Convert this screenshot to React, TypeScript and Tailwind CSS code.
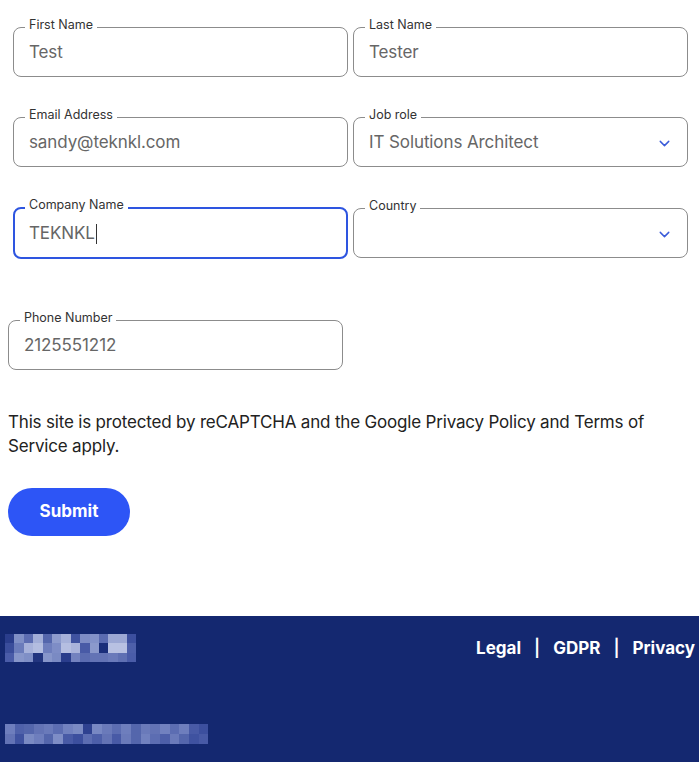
import { ChevronDown } from "lucide-react";

const mosaicTop = [
  ["bg-[#2a3d8c]", "bg-[#7f8fc6]", "bg-[#5c6db2]", "bg-[#a2aed8]", "bg-[#5466ac]", "bg-[#8d9bcd]", "bg-[#a6b1da]", "bg-[#3f52a0]", "bg-[#7d8cc5]", "bg-[#8392c9]", "bg-[#5a6bb1]", "bg-[#9ca8d4]", "bg-[#9ca8d4]", "bg-[#3c4f9e]"],
  ["bg-[#3a4d9b]", "bg-[#6b7cbb]", "bg-[#a6b1da]", "bg-[#b3bde0]", "bg-[#6e7ebd]", "bg-[#7e8dc6]", "bg-[#b5bee1]", "bg-[#a9b3db]", "bg-[#485aa6]", "bg-[#8b99cc]", "bg-[#1a2e7a]", "bg-[#b8c1e2]", "bg-[#b8c1e2]", "bg-[#4d5fa9]"],
  ["bg-[#4a5ca8]", "bg-[#8796ca]", "bg-[#7f8fc6]", "bg-[#22357f]", "bg-[#8796ca]", "bg-[#7a8ac3]", "bg-[#2a3d8c]", "bg-[#7382bf]", "bg-[#5b6cb1]", "bg-[#6373b5]", "bg-[#6373b5]", "bg-[#6a7aba]", "bg-[#5f70b3]", "bg-[#4a5ca8]"],
];

const mosaicBottom = [
  ["bg-[#6e7ebd]", "bg-[#4f61aa]", "bg-[#5466ac]", "bg-[#6373b5]", "bg-[#6a7aba]", "bg-[#5c6db2]", "bg-[#7181bf]", "bg-[#7a8ac3]", "bg-[#2e4190]", "bg-[#7888c3]", "bg-[#6a7aba]", "bg-[#5c6db2]", "bg-[#6e7ebd]", "bg-[#5466ac]", "bg-[#6a7aba]", "bg-[#6373b5]", "bg-[#7181bf]", "bg-[#5c6db2]", "bg-[#6e7ebd]", "bg-[#485aa6]", "bg-[#3c4f9e]"],
  ["bg-[#6373b5]", "bg-[#3f52a0]", "bg-[#7a8ac3]", "bg-[#6e7ebd]", "bg-[#5466ac]", "bg-[#7e8dc6]", "bg-[#485aa6]", "bg-[#3c4f9e]", "bg-[#5c6db2]", "bg-[#4d5fa9]", "bg-[#6373b5]", "bg-[#485aa6]", "bg-[#6a7aba]", "bg-[#5466ac]", "bg-[#7181bf]", "bg-[#5c6db2]", "bg-[#4d5fa9]", "bg-[#6a7aba]", "bg-[#5466ac]", "bg-[#3f52a0]", "bg-[#485aa6]"],
];

function Field({
  label,
  value,
  select,
  focused,
  className = "",
}: {
  label: string;
  value: string;
  select?: boolean;
  focused?: boolean;
  className?: string;
}) {
  return (
    <div
      className={`relative h-[50px] w-[335px] rounded-[8px] ${
        focused ? "border-2 border-[#2e55e0]" : "border border-[#8c8c8c]"
      } ${className}`}
    >
      <span
        className={`absolute ${focused ? "-top-[12px] left-[10px]" : "-top-[11px] left-[11px]"} bg-white px-[4px] text-[12.5px] leading-[16px] text-[#333]`}
      >
        {label}
      </span>
      <div className={`flex h-full items-center pt-[2px] ${focused ? "pl-[14px]" : "pl-[15px]"} pr-[14px]`}>
        <span className="text-[17px] tracking-[-0.1px] text-[#666]">{value}</span>
        {focused && <span className="ml-[1px] h-[20px] w-px bg-[#333]" />}
        {select && <ChevronDown className="ml-auto h-[17px] w-[17px] text-[#3a5bd9]" strokeWidth={2} />}
      </div>
    </div>
  );
}

export default function App() {
  return (
    <div className="min-h-[762px] w-[699px] bg-white font-['Inter',sans-serif]">
      {/* Form */}
      <div className="h-[616px] pt-[27px]">
        <div className="flex flex-col gap-[40px] pl-[13px]">
          <div className="flex gap-[5px]">
            <Field label="First Name" value="Test" />
            <Field label="Last Name" value="Tester" />
          </div>
          <div className="flex gap-[5px]">
            <Field label="Email Address" value="sandy@teknkl.com" />
            <Field label="Job role" value="IT Solutions Architect" select />
          </div>
          <div className="flex items-center gap-[5px]">
            <Field label="Company Name" value="TEKNKL" focused className="h-[52px]" />
            <Field label="Country" value="" select />
          </div>
        </div>

        <div className="mt-[61px] pl-[8px]">
          <Field label="Phone Number" value="2125551212" />
        </div>

        <p className="mt-[40px] px-[8px] text-[17px] leading-[24px] tracking-[-0.18px] text-[#222]">
          This site is protected by reCAPTCHA and the Google Privacy Policy and Terms of Service apply.
        </p>

        <button className="ml-[8px] mt-[30px] h-[48px] w-[122px] rounded-full bg-[#2d55f6] text-[17px] font-bold text-white">
          Submit
        </button>
      </div>

      {/* Footer */}
      <div className="h-[146px] bg-[#142870] pt-[18px]">
        <div className="flex items-start justify-between pl-[5px] pr-[4px]">
          <div className="flex flex-col">
            {mosaicTop.map((row, i) => (
              <div key={i} className="flex">
                {row.map((c, j) => (
                  <div key={j} className={`h-[9.4px] w-[9.4px] ${c}`} />
                ))}
              </div>
            ))}
          </div>
          <div className="mt-[2px] flex items-center gap-[13px] text-[17px] font-bold text-white">
            <span>Legal</span>
            <span className="font-semibold">|</span>
            <span>GDPR</span>
            <span className="font-semibold">|</span>
            <span>Privacy</span>
          </div>
        </div>
        <div className="mt-[62px] flex flex-col pl-[5px]">
          {mosaicBottom.map((row, i) => (
            <div key={i} className="flex">
              {row.map((c, j) => (
                <div key={j} className={`h-[10px] w-[9.7px] ${c}`} />
              ))}
            </div>
          ))}
        </div>
      </div>
    </div>
  );
}
